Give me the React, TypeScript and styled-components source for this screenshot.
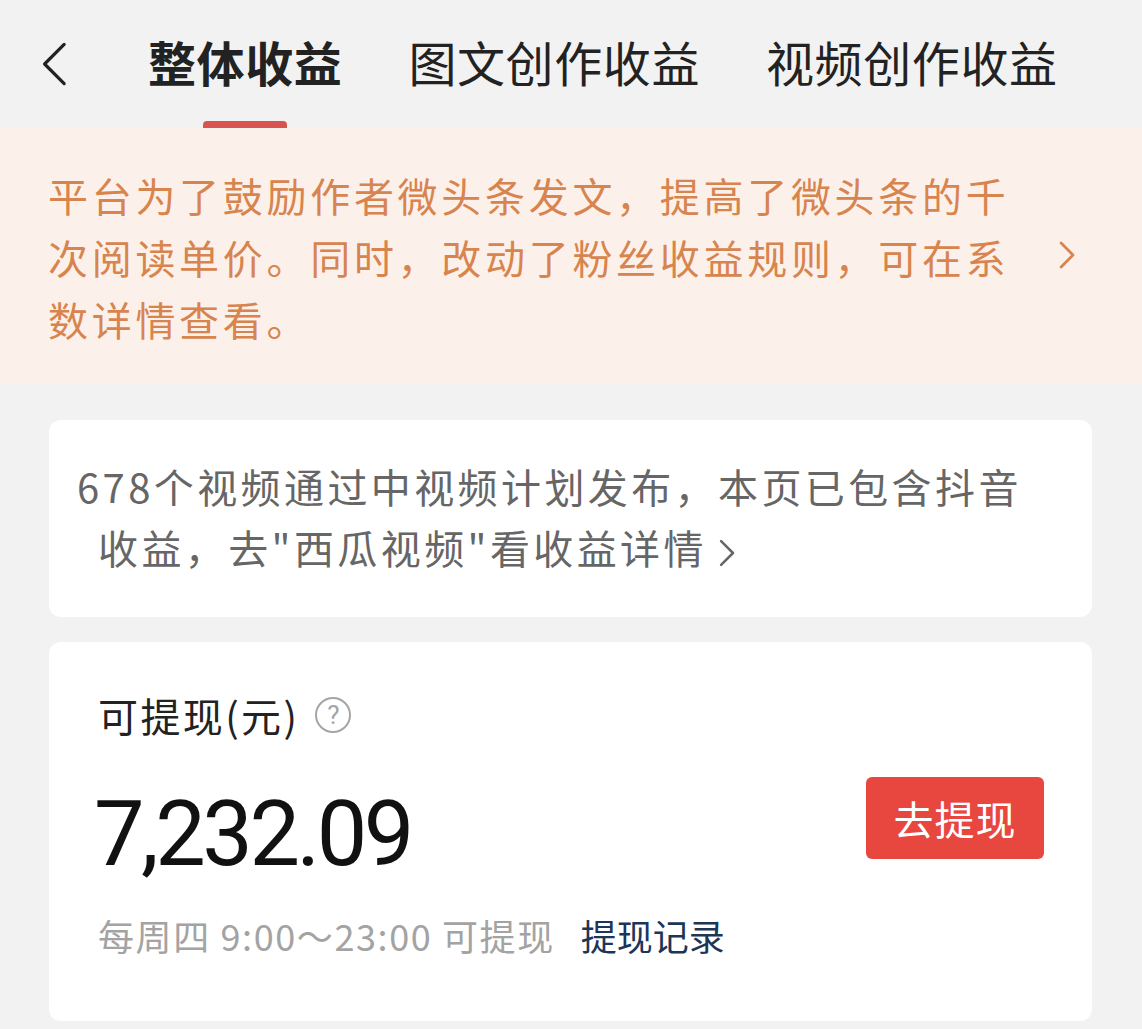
import styled, { createGlobalStyle } from 'styled-components';

const GlobalStyle = createGlobalStyle`
  html, body {
    margin: 0;
    padding: 0;
    background: #f2f2f2;
  }
  body {
    font-family: 'Noto Sans CJK SC', 'Noto Sans', sans-serif;
  }
`;

const Page = styled.div`
  width: 1142px;
  min-height: 1029px;
  background: #f2f2f2;
  padding-bottom: 10px;
`;

const Header = styled.div`
  display: flex;
  align-items: stretch;
  height: 128px;
  padding-left: 40px;
  box-sizing: border-box;
`;

const BackButton = styled.div`
  width: 108px;
  display: flex;
  align-items: center;
  color: #222;
`;

const Tabs = styled.div`
  display: flex;
  gap: 66px;
`;

const Tab = styled.div<{ $active?: boolean }>`
  position: relative;
  display: flex;
  align-items: center;
  padding-bottom: 6px;
  font-size: 48px;
  letter-spacing: 0.6px;
  font-weight: ${(p) => (p.$active ? 600 : 400)};
  color: #222;

  &::after {
    content: '';
    display: ${(p) => (p.$active ? 'block' : 'none')};
    position: absolute;
    bottom: 0;
    left: 50%;
    width: 84px;
    height: 7px;
    margin-left: -42px;
    border-radius: 4px 4px 0 0;
    background: #d95450;
  }
`;

const Notice = styled.div`
  display: flex;
  align-items: center;
  background: #fcf1ea;
  padding: 36px 0 33px 48px;
  height: 255px;
  box-sizing: border-box;
`;

const NoticeText = styled.div`
  width: 985px;
  font-size: 40px;
  line-height: 62px;
  letter-spacing: 3.7px;
  color: #d8844e;
`;

const NoticeArrow = styled.div`
  margin-left: 26px;
  margin-top: -4px;
  display: flex;
  color: #d8844e;
`;

const Card = styled.div`
  margin: 0 50px 0 49px;
  background: #ffffff;
  border-radius: 12px;
`;

const VideoCard = styled(Card)`
  margin-top: 37px;
  padding: 36px 40px 36px 49px;
`;

const VideoText = styled.div`
  text-indent: -21px;
  font-size: 40px;
  line-height: 61px;
  letter-spacing: 3.4px;
  color: #666;
`;

const InlineArrow = styled.span`
  display: inline-block;
  vertical-align: middle;
  margin-left: 12px;
  margin-top: -6px;
  text-indent: 0;
`;

const BalanceCard = styled(Card)`
  margin-top: 25px;
  padding: 48px 48px 61px 49px;
`;

const LabelRow = styled.div`
  display: flex;
  align-items: center;
  gap: 16px;
  font-size: 40px;
  line-height: 50px;
  letter-spacing: 2.4px;
  color: #222;
`;

const HelpIcon = styled.span`
  display: inline-flex;
  align-items: center;
  justify-content: center;
  width: 32px;
  height: 32px;
  border: 2px solid #a5a5a5;
  border-radius: 50%;
  color: #a5a5a5;
  font-family: 'Roboto', sans-serif;
  font-size: 26px;
  line-height: 1;
  letter-spacing: 0;
`;

const AmountRow = styled.div`
  display: flex;
  align-items: center;
  justify-content: space-between;
  margin-top: 26px;
`;

const Amount = styled.div`
  font-family: 'Roboto', 'Noto Sans', sans-serif;
  font-size: 90px;
  line-height: 110px;
  letter-spacing: -3.5px;
  color: #111;
  margin-top: 14px;
  margin-left: -4px;
`;

const WithdrawButton = styled.button`
  width: 178px;
  height: 82px;
  border: none;
  border-radius: 6px;
  background: #e8473f;
  color: #fff;
  font-family: 'Noto Sans CJK SC', sans-serif;
  font-size: 40px;
  letter-spacing: 1px;
  margin-top: -20px;
  padding: 0;
`;

const Footer = styled.div`
  display: flex;
  align-items: center;
  gap: 26px;
  margin-top: 20px;
  font-size: 36px;
  line-height: 50px;
`;

const Muted = styled.span`
  color: #a3a3a3;
  letter-spacing: 1.6px;
`;

const Link = styled.span`
  color: #1d3557;
`;

const Chevron = ({ dir, size, stroke, width }: { dir: 'left' | 'right'; size: number; stroke: string; width: number }) => (
  <svg width={size * 0.6} height={size} viewBox="0 0 12 20" fill="none">
    <path
      d={dir === 'left' ? 'M10.5 1.5L2 10l8.5 8.5' : 'M1.5 1.5L10 10l-8.5 8.5'}
      stroke={stroke}
      strokeWidth={width}
      strokeLinecap="round"
      strokeLinejoin="round"
    />
  </svg>
);

export default function App() {
  return (
    <>
      <GlobalStyle />
      <Page>
        <Header>
          <BackButton>
            <Chevron dir="left" size={46} stroke="#222" width={1.4} />
          </BackButton>
          <Tabs>
            <Tab $active>整体收益</Tab>
            <Tab>图文创作收益</Tab>
            <Tab>视频创作收益</Tab>
          </Tabs>
        </Header>

        <Notice>
          <NoticeText>
            平台为了鼓励作者微头条发文，提高了微头条的千次阅读单价。同时，改动了粉丝收益规则，可在系数详情查看。
          </NoticeText>
          <NoticeArrow>
            <Chevron dir="right" size={28} stroke="#d8844e" width={2} />
          </NoticeArrow>
        </Notice>

        <VideoCard>
          <VideoText>
            678个视频通过中视频计划发布，本页已包含抖音收益，去"西瓜视频"看收益详情
            <InlineArrow>
              <Chevron dir="right" size={28} stroke="#666" width={1.8} />
            </InlineArrow>
          </VideoText>
        </VideoCard>

        <BalanceCard>
          <LabelRow>
            <span>可提现(元)</span>
            <HelpIcon>?</HelpIcon>
          </LabelRow>
          <AmountRow>
            <Amount>7,232.09</Amount>
            <WithdrawButton>去提现</WithdrawButton>
          </AmountRow>
          <Footer>
            <Muted>每周四 9:00～23:00 可提现</Muted>
            <Link>提现记录</Link>
          </Footer>
        </BalanceCard>
      </Page>
    </>
  );
}
